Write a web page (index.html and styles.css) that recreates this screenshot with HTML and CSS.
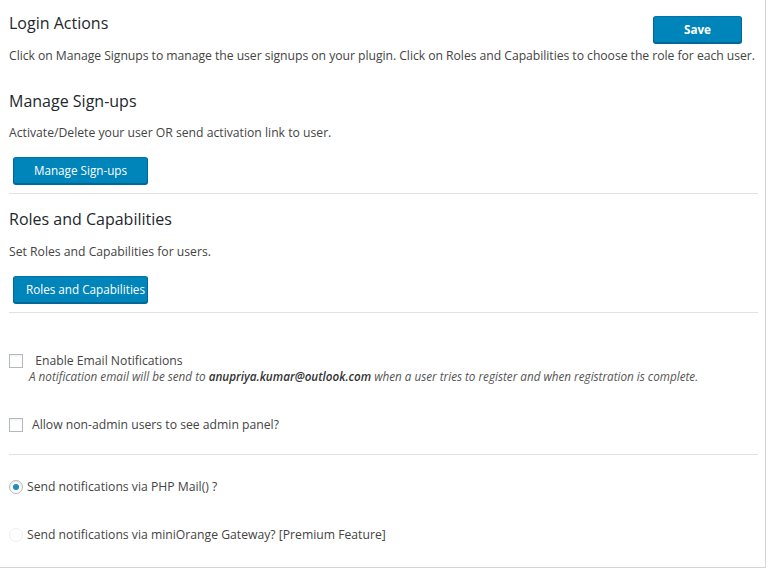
FILE: index.html
```html
<!DOCTYPE html>
<html>
<head>
<meta charset="utf-8">
<link rel="stylesheet" href="styles.css">
</head>
<body>
<div class="panel">
  <div class="head-row">
    <h3 class="title first">Login Actions</h3>
    <a class="btn save">Save</a>
  </div>
  <p class="desc top">Click on Manage Signups to manage the user signups on your plugin. Click on Roles and Capabilities to choose the role for each user.</p>

  <h3 class="title sec">Manage Sign-ups</h3>
  <p class="desc d2">Activate/Delete your user OR send activation link to user.</p>
  <a class="btn action">Manage Sign-ups</a>
  <hr class="rule">

  <h3 class="title sec2">Roles and Capabilities</h3>
  <p class="desc d3">Set Roles and Capabilities for users.</p>
  <a class="btn action">Roles and Capabilities</a>
  <hr class="rule">

  <div class="opt opt-first">
    <span class="box"></span>
    <div class="opt-text">
      <div class="label lab1">&nbsp;Enable Email Notifications</div>
      <div class="note">A notification email will be send to <b>anupriya.kumar@outlook.com</b> when a user tries to register and when registration is complete.</div>
    </div>
  </div>
  <div class="opt opt-second">
    <span class="box"></span>
    <div class="label">Allow non-admin users to see admin panel?</div>
  </div>
  <hr class="rule rule3">

  <div class="opt radio-row first-radio">
    <span class="radio checked"></span>
    <div class="label">Send notifications via PHP Mail() ?</div>
  </div>
  <div class="opt radio-row second-radio">
    <span class="radio disabled"></span>
    <div class="label">Send notifications via miniOrange Gateway? [Premium Feature]</div>
  </div>
</div>
</body>
</html>
```
FILE: styles.css
```css
html, body {
  margin: 0;
  padding: 0;
  background: #fff;
}
body {
  font-family: "Open Sans", "Noto Sans", sans-serif;
  font-size: 12.2px;
  color: #444;
}
.panel {
  height: 567px;
  padding: 0 7px 0 9px;
  box-sizing: content-box;
  width: 749px;
  border-right: 1px solid #d5d5d5;
  border-bottom: 1px solid #d5d5d5;
  overflow: hidden;
}
.head-row {
  display: flex;
  justify-content: space-between;
  align-items: flex-start;
}
.title {
  margin: 0;
  font-size: 16px;
  line-height: 22px;
  font-weight: 400;
  color: #23282d;
}
.title.first { margin-top: 12px; }
.title.sec { margin-top: 25px; }
.title.sec2 { margin-top: 14px; }
.desc {
  margin: 11px 0 0;
  line-height: 18px;
}
.desc.top {
  margin-top: 4px;
  white-space: nowrap;
  letter-spacing: -0.04px;
}
.desc.d2 { margin-top: 12px; }
.desc.d3 { margin-top: 13px; }
.btn {
  display: block;
  box-sizing: border-box;
  font-size: 11.7px;
  color: #fff;
  background: #0085ba;
  border: 1px solid #0073aa;
  border-color: #0073aa #006799 #006799;
  border-radius: 3px;
  box-shadow: 0 1px 0 #006799;
  height: 27px;
  line-height: 25px;
  padding: 0 12px;
  white-space: nowrap;
  text-align: center;
  cursor: pointer;
}
.save {
  margin: 16px 16px 0 0;
  width: 89px;
  font-weight: 700;
}
.action {
  margin: 15px 0 0 4px;
  width: 135px;
}
.rule {
  margin: 9px 0 0;
  border: 0;
  border-top: 1px solid #e1e1e1;
  height: 0;
}
.rule3 { margin-top: 20px; }
.opt {
  display: flex;
  align-items: flex-start;
}
.opt-first { margin-top: 39px; }
.opt-second { margin-top: 31px; }
.label {
  line-height: 18px;
  color: #444;
}
.lab1 { line-height: 17px; }
.box {
  flex: none;
  width: 12px;
  height: 12px;
  border: 1px solid #b4b9be;
  box-shadow: inset 0 1px 2px rgba(0,0,0,0.07);
  margin: 2px 9px 0 0;
  background: #fff;
}
.note {
  font-style: italic;
  font-size: 11.7px;
  line-height: 18px;
  color: #555;
  margin: -2px 0 0 -3px;
}
.note b {
  font-weight: 600;
  color: #333;
}
.radio-row { align-items: center; }
.first-radio { margin-top: 23px; }
.second-radio { margin-top: 30px; }
.radio {
  flex: none;
  width: 14px;
  height: 14px;
  box-sizing: border-box;
  border-radius: 50%;
  border: 1px solid #b4b9be;
  box-shadow: inset 0 1px 2px rgba(0,0,0,0.1);
  margin-right: 4px;
  display: flex;
  align-items: center;
  justify-content: center;
}
.radio.checked::after {
  content: "";
  width: 6px;
  height: 6px;
  border-radius: 50%;
  background: #1e8cbe;
}
.radio.disabled {
  border-color: #eee;
  box-shadow: none;
}
```
